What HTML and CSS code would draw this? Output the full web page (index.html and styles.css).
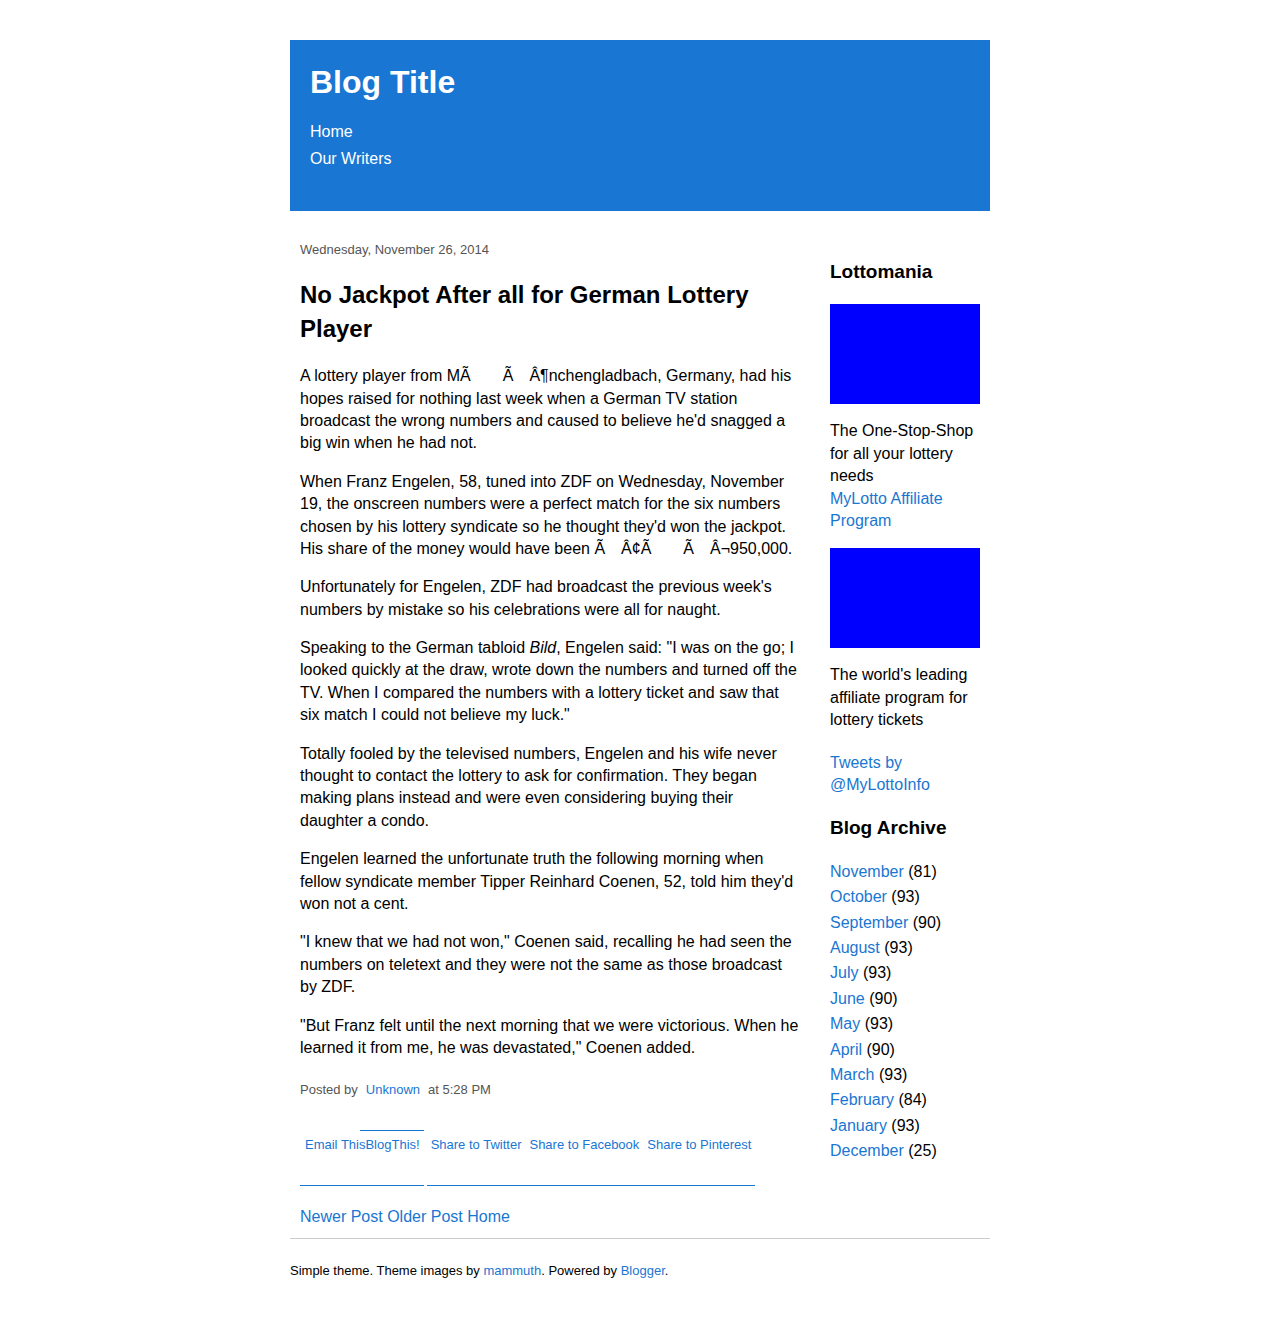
FILE: index.html
```html
<!DOCTYPE html>
<html lang="en">
<head>
<meta charset="utf-8">
<meta name="viewport" content="width=device-width, initial-scale=1">
<title>Blog Title</title>
<link rel="stylesheet" href="styles.css">
</head>
<body>
<div class="page">
  <header class="header">
    <h1 class="blog-title">Blog Title</h1>
    <nav>
      <ul class="nav-list">
        <li><a href="#">Home</a></li>
        <li><a href="#">Our Writers</a></li>
      </ul>
    </nav>
  </header>

  <div class="columns">
    <main class="main">
      <article>
        <div class="meta">Wednesday, November 26, 2014</div>
        <h2 class="post-title">No Jackpot After all for German Lottery Player</h2>
        <div class="post-body">
          <p>A lottery player from MÃ&emsp;&emsp;Ã&emsp;Â¶nchengladbach, Germany, had his hopes raised for nothing last week when a German TV station broadcast the wrong numbers and caused to believe he'd snagged a big win when he had not.</p>
          <p>When Franz Engelen, 58, tuned into ZDF on Wednesday, November 19, the onscreen numbers were a perfect match for the six numbers chosen by his lottery syndicate so he thought they'd won the jackpot. His share of the money would have been Ã&emsp;Â¢Ã&emsp;&emsp;Ã&emsp;Â¬950,000.</p>
          <p>Unfortunately for Engelen, ZDF had broadcast the previous week's numbers by mistake so his celebrations were all for naught.</p>
          <p>Speaking to the German tabloid <i>Bild</i>, Engelen said: "I was on the go; I looked quickly at the draw, wrote down the numbers and turned off the TV. When I compared the numbers with a lottery ticket and saw that six match I could not believe my luck."</p>
          <p>Totally fooled by the televised numbers, Engelen and his wife never thought to contact the lottery to ask for confirmation. They began making plans instead and were even considering buying their daughter a condo.</p>
          <p>Engelen learned the unfortunate truth the following morning when fellow syndicate member Tipper Reinhard Coenen, 52, told him they'd won not a cent.</p>
          <p>"I knew that we had not won," Coenen said, recalling he had seen the numbers on teletext and they were not the same as those broadcast by ZDF.</p>
          <p>"But Franz felt until the next morning that we were victorious. When he learned it from me, he was devastated," Coenen added.</p>
        </div>
        <div class="meta byline"><span>Posted by</span><a href="#">Unknown</a><span>at 5:28 PM</span></div>
        <div class="share">
          <div class="share-group">
            <a href="#" class="share-email">Email This</a><a href="#" class="share-blog">BlogThis!</a>
          </div>
          <div class="share-group">
            <a href="#">Share to Twitter</a><a href="#">Share to Facebook</a><a href="#">Share to Pinterest</a>
          </div>
        </div>
      </article>
      <nav class="pager"><a href="#">Newer Post</a> <a href="#">Older Post</a> <a href="#">Home</a></nav>
    </main>

    <aside class="sidebar">
      <h3>Lottomania</h3>
      <div class="banner"></div>
      <p>The One-Stop-Shop for all your lottery needs<br><a href="#">MyLotto Affiliate Program</a></p>
      <div class="banner"></div>
      <p>The world's leading affiliate program for lottery tickets</p>
      <div class="tweets"><a href="#">Tweets by @MyLottoInfo</a></div>
      <h3>Blog Archive</h3>
      <ul class="archive">
        <li><a href="#">November</a> (81)</li>
        <li><a href="#">October</a> (93)</li>
        <li><a href="#">September</a> (90)</li>
        <li><a href="#">August</a> (93)</li>
        <li><a href="#">July</a> (93)</li>
        <li><a href="#">June</a> (90)</li>
        <li><a href="#">May</a> (93)</li>
        <li><a href="#">April</a> (90)</li>
        <li><a href="#">March</a> (93)</li>
        <li><a href="#">February</a> (84)</li>
        <li><a href="#">January</a> (93)</li>
        <li><a href="#">December</a> (25)</li>
      </ul>
    </aside>
  </div>

  <footer class="footer">Simple theme. Theme images by <a href="#">mammuth</a>. Powered by <a href="#">Blogger</a>.</footer>
</div>
</body>
</html>
```
FILE: styles.css
```css
* {
  box-sizing: border-box;
}

body {
  margin: 0;
  background: #fff;
  color: #000;
  font-family: "Liberation Sans", Arial, Helvetica, sans-serif;
  font-size: 16px;
  line-height: 1.4;
}

a {
  color: #1976d2;
  text-decoration: none;
}

p {
  margin: 16px 0;
}

ul {
  margin: 0;
  padding: 0;
  list-style: none;
}

.page {
  max-width: 700px;
  margin: 0 auto;
  padding: 40px 0 52px;
}

.header {
  padding: 20px 20px 36px;
  background: #1976d2;
  color: #fff;
}

.header a {
  color: #fff;
}

.blog-title {
  margin: 0 0 16px;
  font-size: 32px;
}

.nav-list li {
  margin-bottom: 5px;
  line-height: 22px;
}

.columns {
  display: flex;
  gap: 30px;
  padding: 30px 10px 10px;
}

.main {
  flex: 1;
  min-width: 0;
}

.meta {
  color: #555;
  font-size: 13px;
}

.post-title {
  margin: 19px 0 20px;
  font-size: 24px;
}

.byline {
  display: flex;
  gap: 8px;
  margin-top: 22px;
}

.share {
  display: flex;
  gap: 3px;
  margin-top: 30px;
  font-size: 13px;
}

.share-group {
  display: flex;
  padding-bottom: 31px;
  border-bottom: 1px solid #1976d2;
}

.share a {
  padding: 5px 4px 0;
  border-top: 1px solid transparent;
}

.share .share-email {
  padding: 5px 0 0 5px;
}

.share .share-blog {
  margin-left: -5px;
  padding-left: 5px;
  border-top-color: #1976d2;
}

.pager {
  margin-top: 20px;
}

.sidebar {
  flex: 0 0 150px;
}

.sidebar h3 {
  margin: 18px 0 19px;
  font-size: 19px;
}

.banner {
  height: 100px;
  background: #00f;
}

.tweets {
  margin: 20px 0 19px;
}

.archive li {
  margin-bottom: 3px;
}

.footer {
  padding-top: 23px;
  border-top: 1px solid #ccc;
  font-size: 13px;
}
```
